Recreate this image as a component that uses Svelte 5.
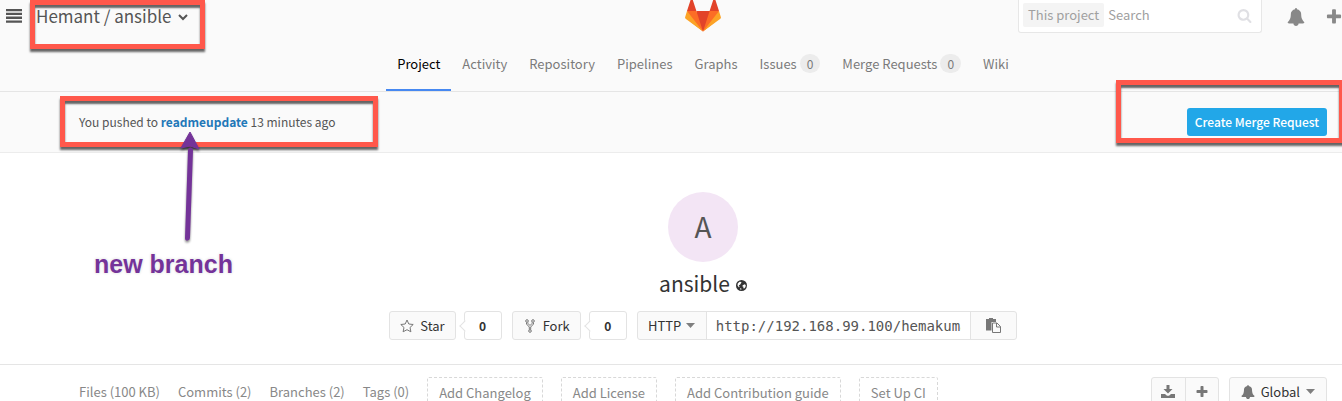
<script>
  const tabs = [
    { label: 'Project', active: true },
    { label: 'Activity' },
    { label: 'Repository' },
    { label: 'Pipelines' },
    { label: 'Graphs' },
    { label: 'Issues', count: 0 },
    { label: 'Merge Requests', count: 0 },
    { label: 'Wiki' }
  ];
  const stats = ['Files (100 KB)', 'Commits (2)', 'Branches (2)', 'Tags (0)'];
  const missing = ['Add Changelog', 'Add License', 'Add Contribution guide', 'Set Up CI'];
</script>

{#snippet bell(size)}
  <svg width={size} height={size} viewBox="0 0 1792 1792" fill="currentColor" aria-hidden="true"><path d="M1728 1408q0 52-38 90t-90 38h-448q0 106-75 181t-181 75-181-75-75-181h-448q-52 0-90-38t-38-90q50-42 91-88t85-119.5 74.5-158.5 50-206 19.5-260q0-152 117-282.5t307-158.5q-8-19-8-39 0-40 28-68t68-28 68 28 28 68q0 20-8 39 190 28 307 158.5t117 282.5q0 139 19.5 260t50 206 74.5 158.5 85 119.5 91 88z" /></svg>
{/snippet}

{#snippet plus(size)}
  <svg width={size} height={size} viewBox="0 0 1792 1792" fill="currentColor" aria-hidden="true"><path d="M1600 736v192q0 40-28 68t-68 28h-416v416q0 40-28 68t-68 28h-192q-40 0-68-28t-28-68v-416h-416q-40 0-68-28t-28-68v-192q0-40 28-68t68-28h416v-416q0-40 28-68t68-28h192q40 0 68 28t28 68v416h416q40 0 68 28t28 68z" /></svg>
{/snippet}

{#snippet caret()}
  <svg width="9" height="5" viewBox="0 0 9 5" fill="#7f7f7f" aria-hidden="true"><path d="M0 0h9L4.500 5z" /></svg>
{/snippet}

<div class="viewport">
  <div class="page">
    <header>
      <div class="left">
        <button class="bare" aria-label="Toggle navigation">
          <svg width="16" height="14" viewBox="0 0 16 14" fill="#555"><path d="M0 0h16v2.300H0zM0 3.800h16v2.300H0zM0 7.600h16v2.300H0zM0 11.400h16v2.300H0z" /></svg>
        </button>
        <h1>
          <span><a href="#hemant">Hemant</a> / <a href="#ansible">ansible</a></span>
          <svg width="10" height="7" viewBox="0 0 10 7" fill="none" stroke="#555" stroke-width="2"><path d="M1 1l4 4 4-4" /></svg>
        </h1>
      </div>
      <a class="logo" href="#home" aria-label="Dashboard">
        <svg width="36" height="33" viewBox="0 3 36 33">
          <path fill="#e24329" d="M2 14l9.380 9v-9l-4-12.280c-.205-.632-1.176-.632-1.380 0zM34 14l-9.380 9v-9l4-12.280c.205-.632 1.176-.632 1.380 0zM18 34.380L3 14h30z" />
          <path fill="#fc6d26" d="M18 34.380L11.380 14H2l4 11zM18 34.380L24.620 14H34l-4 11z" />
          <path fill="#fca326" d="M2 14L.1 20.160c-.18.565 0 1.200.5 1.560L18 34.380zM34 14l1.900 6.160c.18.565 0 1.200-.5 1.560L18 34.380z" />
        </svg>
      </a>
      <div class="right">
        <form class="search">
          <span class="scope">This project</span>
          <input type="search" placeholder="Search" aria-label="Search this project" />
          <svg width="15" height="15" viewBox="0 0 1792 1792" fill="#e0e0e4" aria-hidden="true"><path d="M1216 832q0-185-131.500-316.500t-316.500-131.500-316.500 131.500-131.500 316.500 131.500 316.500 316.500 131.500 316.500-131.500 131.500-316.500zm512 832q0 52-38 90t-90 38q-54 0-90-38l-343-342q-179 124-399 124-143 0-273.500-55.500t-225-150-150-225-55.500-273.500 55.500-273.500 150-225 225-150 273.500-55.500 273.500 55.500 225 150 150 225 55.500 273.500q0 220-124 399l343 343q37 37 37 90z" /></svg>
        </form>
        <button class="bare todo" aria-label="Todos">{@render bell(18)}</button>
        <button class="bare" aria-label="New project">{@render plus(18)}</button>
      </div>
    </header>

    <nav class="tabs" aria-label="Project">
      {#each tabs as tab}
        <a href="#tab" class:active={tab.active}>{tab.label}{#if tab.count !== undefined}<span class="badge">{tab.count}</span>{/if}</a>
      {/each}
    </nav>

    <section class="event">
      <p>You pushed to <a href="#readmeupdate">readmeupdate</a> 13 minutes ago</p>
      <button class="create">Create Merge Request</button>
    </section>

    <main>
      <div class="avatar">A</div>
      <h2>
        ansible
        <svg width="11" height="11" viewBox="0 0 22 22"><circle cx="11" cy="11" r="11" fill="#333" /><path fill="#fff" d="M3.500 7L7 3.500l4 .5-1 2.500-2 3-2.500 1L7 13l-1 2-3-4zM13 11l4-2.500 2.500 1.500-.5 4-3 3.500-1.500-2 .5-2-2-.5zM9 16l2 1.500-.5 2L8 18.500z" /></svg>
      </h2>
      <div class="actions">
        <button class="btn">
          <svg width="14" height="14" viewBox="0 0 14 14" fill="none" stroke="#777"><path d="M7 1l1.800 4 4.400.500-3.200 3 .9 4.300L7 10.700l-3.900 2.100.9-4.300-3.200-3L5.200 5z" /></svg>
          Star
        </button>
        <span class="count">0</span>
        <button class="btn fork">
          <svg width="10" height="14" viewBox="0 0 10 14" fill="none" stroke="#777"><circle cx="2" cy="2" r="1.300" /><circle cx="8" cy="2" r="1.300" /><circle cx="5" cy="12" r="1.300" /><path d="M1.500 3.500v1.500L4.300 8v2.700M3 3.500v1L5 6.500l2-2v-1M8.500 3.500v1.500L5.700 8v2.700" /></svg>
          Fork
        </button>
        <span class="count">0</span>
        <div class="clone">
          <button class="protocol">HTTP {@render caret()}</button>
          <input type="text" readonly value="http://192.168.99.100/hemakumar/ansible.git" aria-label="Project clone URL" />
          <button class="copy" aria-label="Copy URL">
            <svg width="15" height="15" viewBox="0 0 15 15"><path fill="#777" d="M0 1h3V0h4v1h3v3H5.500v8.500H0z" /><path fill="#fafafa" stroke="#777" d="M6.500 5H11l3.500 3.500v6h-8z" /><path fill="none" stroke="#777" d="M10.500 5v4h4" /></svg>
          </button>
        </div>
      </div>
    </main>

    <section class="stats">
      <ul>
        {#each stats as s}<li><a href="#stat">{s}</a></li>{/each}
        {#each missing as m}<li><a class="missing" href="#add">{m}</a></li>{/each}
      </ul>
      <div class="tools">
        <div class="group">
          <button aria-label="Download"><svg width="14" height="14" viewBox="0 0 14 14" fill="#777"><path d="M5.500 0h3v4h3L7 8.500 2.500 4h3z" /><path d="M0 9h4l2 1.800h2L10 9h4v4H0z" /></svg></button>
          <button aria-label="Add">{@render plus(14)}</button>
        </div>
        <button class="notify">{@render bell(14)} Global {@render caret()}</button>
      </div>
    </section>

    <div class="mark title-mark"></div>
    <div class="mark push-mark"></div>
    <div class="mark create-mark"></div>
    <svg class="arrow" width="30" height="116" viewBox="0 0 30 116">
      <path d="M16.500 20L13.500 108" stroke="#743399" stroke-width="5" stroke-linecap="round" />
      <path d="M16 2l9 17-9-3-9 2z" fill="#743399" stroke="#743399" />
    </svg>
    <div class="note">new branch</div>
  </div>
</div>

<style>
  :global(body) { margin: 0; background: #fff; }
  .viewport { overflow: hidden; }
  .page {
    position: relative;
    width: calc(100% + 64px);
    font-family: "Noto Sans CJK SC", "Open Sans", sans-serif;
    font-size: 13px;
    line-height: 20px;
    color: #555;
  }
  .page * { box-sizing: border-box; }
  a { color: inherit; text-decoration: none; }
  button, input { font: inherit; color: inherit; margin: 0; }
  button { display: flex; align-items: center; justify-content: center; cursor: pointer; }
  svg { flex: none; display: block; }
  .bare { border: 0; background: none; padding: 0; }

  header {
    display: grid;
    grid-template-columns: 1fr auto 1fr;
    align-items: start;
    height: 38px;
    padding: 0 6px;
    background: #fafafa;
  }
  .left { display: flex; align-items: center; gap: 14px; height: 31px; }
  h1 { display: flex; align-items: center; gap: 6px; margin: 0; font-size: 17px; font-weight: 400; line-height: 24px; }
  h1 svg { margin-top: 4px; }
  .right { display: flex; align-items: center; justify-content: flex-end; padding-right: 57px; color: #888; }
  .search {
    display: flex;
    align-items: center;
    width: 244px;
    height: 33px;
    padding: 0 9px 2px 4px;
    border: 1px solid #e7e7e7;
    border-top: 0;
    border-radius: 0 0 3px 3px;
    background: #fff;
    color: #a0a0a0;
  }
  .scope { padding: 2px 5px; border-radius: 2px; background: #f4f4f4; white-space: nowrap; }
  .search input { flex: 1; min-width: 0; padding: 0 4px; border: 0; background: none; outline: 0; }
  .search input::placeholder { color: #a0a0a0; opacity: 1; }
  .todo { margin: 0 20px 0 25px; }

  .tabs {
    display: flex;
    justify-content: center;
    height: 54px;
    border-bottom: 1px solid #e5e5e5;
    background: #fafafa;
    color: #7a7a7a;
  }
  .tabs a { height: 53px; padding: 16px 11px 0; white-space: nowrap; }
  .tabs .active { border-bottom: 2px solid #4688f1; color: #000; }
  .badge { display: inline-block; margin-left: 3px; padding: 0 7px; border-radius: 10px; background: #ececec; font-size: 12px; line-height: 19px; }

  .event {
    display: flex;
    align-items: center;
    justify-content: space-between;
    height: 61px;
    padding: 0 79px;
    border-bottom: 1px solid #ececec;
    background: #fafafa;
    font-size: 12px;
  }
  .event p { margin: 0; }
  .event a { color: #1f78b8; font-weight: 700; }
  .create { height: 28px; padding: 0 8px; border: 0; border-radius: 3px; background: #22a7e8; color: #fff; font-weight: 500; }

  main { display: flex; flex-direction: column; align-items: center; padding: 39px 0 24px; border-bottom: 1px solid #e5e5e5; }
  .avatar { width: 70px; height: 70px; border-radius: 50%; background: #f3e5f5; font-size: 28px; line-height: 68px; text-align: center; }
  h2 { display: flex; align-items: center; gap: 6px; margin: 5px 0 12px; font-size: 21px; font-weight: 400; line-height: 32px; color: #333; }
  h2 svg { margin-top: 4px; }
  .actions { display: flex; color: #333; }
  .btn, .count, .clone, .group, .notify { height: 29px; border: 1px solid #e3e3e3; border-radius: 3px; background: #fafafa; }
  .btn { gap: 6px; padding: 0 10px; }
  .btn.fork { gap: 8px; padding: 0 10px 0 12px; }
  .count {
    position: relative;
    width: 38px;
    margin: 0 10px 0 8px;
    background: #fff;
    font-size: 12px;
    font-weight: 700;
    line-height: 27px;
    text-align: center;
  }
  .count::before {
    content: "";
    position: absolute;
    left: -4px;
    top: 10px;
    width: 7px;
    height: 7px;
    border: solid #e3e3e3;
    border-width: 0 0 1px 1px;
    background: #fff;
    transform: rotate(45deg);
  }
  .clone { display: flex; width: 380px; }
  .protocol, .copy { border: 0; background: none; }
  .protocol { gap: 5px; width: 69px; padding: 0; border-right: 1px solid #e3e3e3; }
  .clone input {
    flex: 1;
    min-width: 0;
    padding: 0 9px;
    border: 0;
    background: #fff;
    font-family: "DejaVu Sans Mono", monospace;
    font-size: 14px;
    color: #555;
  }
  .copy { width: 46px; padding: 0; border-left: 1px solid #e3e3e3; }

  .stats { display: flex; justify-content: space-between; padding: 12px 79px; color: #888; }
  ul { display: flex; gap: 18px; margin: 0; padding: 0; list-style: none; }
  li a { display: block; padding: 5px 0; white-space: nowrap; }
  li .missing { padding: 5px 11px; border: 1px dashed #d8d8d8; border-width: 1px 1px 1px; border-radius: 2px; }
  .tools { display: flex; gap: 10px; color: #777; }
  .group { display: flex; }
  .group button { width: 33px; padding: 0; border: 0; background: none; }
  .group button + button { border-left: 1px solid #e3e3e3; }
  .notify { gap: 6px; padding: 0 11px; color: #333; }
  .notify :global(svg:first-child) { color: #777; }

  .mark {
    position: absolute;
    border: 5px solid #ff584b;
    box-shadow: 0 3px 2px rgba(0, 0, 0, .6), inset 0 3px 2px rgba(0, 0, 0, .6);
    pointer-events: none;
  }
  .title-mark { left: 30px; top: 0; width: 175px; height: 49px; }
  .push-mark { left: 60px; top: 96px; width: 318px; height: 51px; }
  .create-mark { right: 62px; top: 80px; width: 228px; height: 63px; }
  .arrow { position: absolute; left: 174px; top: 130px; filter: drop-shadow(0 2px 1px rgba(0, 0, 0, .45)); }
  .note {
    position: absolute;
    left: 94px;
    top: 249px;
    font-family: "Liberation Sans", sans-serif;
    font-size: 25px;
    font-weight: 700;
    line-height: 30px;
    color: #743399;
    text-shadow: 0 0 2px #fff, 0 0 3px #ccc;
  }
</style>
